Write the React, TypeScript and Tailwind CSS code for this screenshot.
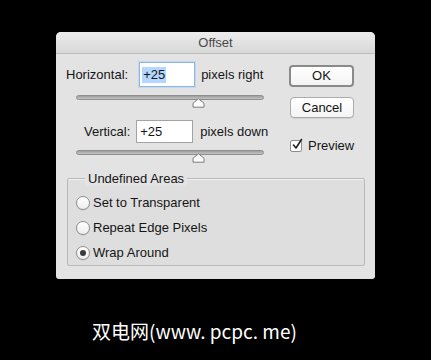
import React from 'react';

function Slider() {
  return (
    <div className="relative ml-[20px] h-[13px] w-[188px]">
      <div className="h-[5px] w-full rounded-full border border-[#8f8f8f] bg-gradient-to-b from-[#9d9d9d] to-[#c4c4c4]" />
      {/* thumb */}
      <svg className="absolute left-[116px] top-[3px]" width="13" height="10" viewBox="0 0 13 10">
        <path d="M6.5 0.8 L12 5.2 L12 9.2 L1 9.2 L1 5.2 Z" fill="#fbfbfb" stroke="#7d7d7d" strokeWidth="1" strokeLinejoin="round" />
      </svg>
    </div>
  );
}

function Radio({ label, checked }: { label: string; checked?: boolean }) {
  return (
    <div className="flex h-[25px] items-center">
      <div className="flex h-[14px] w-[14px] items-center justify-center rounded-full border border-[#8e8e8e] bg-gradient-to-b from-white to-[#eeeeee] shadow-[0_0.5px_0.5px_rgba(0,0,0,0.15)]">
        {checked && <div className="h-[6px] w-[6px] rounded-full bg-[#3b3b3b]" />}
      </div>
      <span className="ml-[3px]">{label}</span>
    </div>
  );
}

export default function App() {
  return (
    <div
      className="h-[360px] w-[431px] overflow-hidden bg-black pl-[56px] pt-[32px] text-[13px] text-[#151515]"
      style={{ fontFamily: '"Liberation Sans", Arial, sans-serif' }}
    >
      <div className="flex h-[247px] w-[319px] flex-col overflow-hidden rounded-t-[5px] rounded-b-[3px] bg-[#e3e3e3]">
        {/* title bar */}
        <div className="flex h-[22px] items-center justify-center border-b border-[#bdbdbd] bg-gradient-to-b from-[#ececec] to-[#d8d8d8] text-[#4a4a4a]">
          Offset
        </div>

        <div className="flex">
          {/* left side */}
          <div className="flex w-[230px] flex-col">
            <div className="mt-[8px] flex h-[25px] items-center">
              <span className="ml-[10px]">Horizontal:</span>
              <div className="ml-[11px] flex h-[25px] w-[56px] items-center border border-[#8fb6e2] bg-white pl-[2px] shadow-[0_0_0_1px_#c3d9f2]">
                <span className="bg-[#b3d7ff] px-[1px] leading-[16px]">+25</span>
              </div>
              <span className="ml-[6px]">pixels right</span>
            </div>
            <div className="mt-[8px]">
              <Slider />
            </div>
            <div className="mt-[12px] flex h-[23px] items-center">
              <span className="ml-[28px]">Vertical:</span>
              <div className="ml-[6px] flex h-[23px] w-[57px] items-center border border-[#a3a3a3] bg-white pl-[3px]">
                +25
              </div>
              <span className="ml-[7px]">pixels down</span>
            </div>
            <div className="mt-[7px]">
              <Slider />
            </div>
          </div>

          {/* right side */}
          <div className="ml-[3px] flex flex-col">
            <div className="mt-[11px] flex h-[22px] w-[65px] items-center justify-center rounded-[4px] border-2 border-[#8a8a8a] bg-gradient-to-b from-white to-[#f4f4f4]">
              OK
            </div>
            <div className="ml-[1px] mt-[10px] flex h-[21px] w-[64px] items-center justify-center rounded-[4px] border border-[#ababab] bg-gradient-to-b from-white to-[#f4f4f4] shadow-[0_0.5px_0.5px_rgba(0,0,0,0.15)]">
              Cancel
            </div>
            <div className="ml-[1px] mt-[18px] flex items-center">
              <div className="relative h-[12px] w-[12px] rounded-[2px] border border-[#8e8e8e] bg-white">
                <svg className="absolute -top-[3px] left-[0px]" width="13" height="13" viewBox="0 0 13 13">
                  <path d="M2.5 7 L5 10 L10.5 1.5" fill="none" stroke="#222" strokeWidth="1.6" strokeLinecap="round" strokeLinejoin="round" />
                </svg>
              </div>
              <span className="ml-[6px]">Preview</span>
            </div>
          </div>
        </div>

        {/* Undefined Areas group */}
        <div className="relative ml-[11px] mt-[15px] h-[88px] w-[298px] rounded-[2px] border border-[#b9b9b9] bg-[#dedede] pl-[8px] pt-[11px] shadow-[inset_0_1px_0_#f0f0f0]">
          <span className="absolute -top-[8px] left-[17px] bg-[#e3e3e3] px-[3px] leading-[15px]">Undefined Areas</span>
          <Radio label="Set to Transparent" />
          <Radio label="Repeat Edge Pixels" />
          <Radio label="Wrap Around" checked />
        </div>
      </div>

      <div
        className="ml-[36px] mt-[40px] text-[19px] leading-[24px] text-white"
        style={{ fontFamily: '"Noto Sans CJK SC", sans-serif' }}
      >
        双电网(www. pcpc. me)
      </div>
    </div>
  );
}
